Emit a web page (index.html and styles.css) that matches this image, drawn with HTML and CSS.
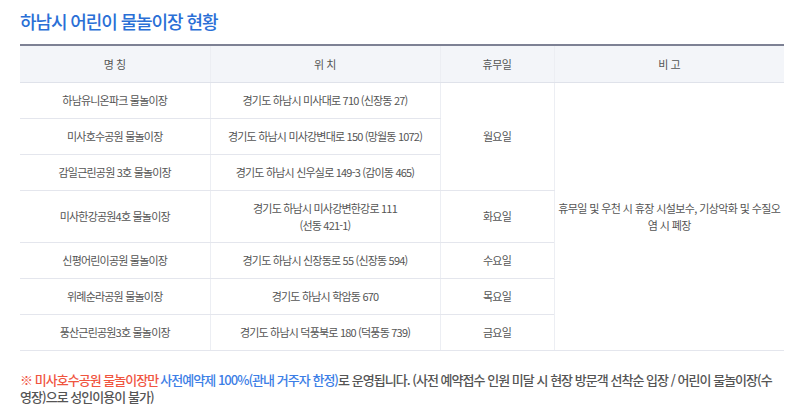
FILE: index.html
```html
<!DOCTYPE html>
<html lang="ko">
<head>
<meta charset="utf-8">
<link rel="stylesheet" href="styles.css">
</head>
<body>
<div class="wrap">
  <h2 class="title">하남시 어린이 물놀이장 현황</h2>
  <table class="tbl">
    <colgroup>
      <col class="c1"><col class="c2"><col class="c3"><col class="c4">
    </colgroup>
    <thead>
      <tr><th>명 칭</th><th>위 치</th><th>휴무일</th><th>비 고</th></tr>
    </thead>
    <tbody>
      <tr><td>하남유니온파크 물놀이장</td><td>경기도 하남시 미사대로 710 (신장동 27)</td><td rowspan="3">월요일</td><td rowspan="7" class="note-cell">휴무일 및 우천 시 휴장 시설보수, 기상악화 및 수질오염 시 폐장</td></tr>
      <tr><td>미사호수공원 물놀이장</td><td>경기도 하남시 미사강변대로 150 (망월동 1072)</td></tr>
      <tr><td>감일근린공원 3호 물놀이장</td><td>경기도 하남시 신우실로 149-3 (감이동 465)</td></tr>
      <tr class="tall"><td>미사한강공원4호 물놀이장</td><td>경기도 하남시 미사강변한강로 111<br>(선동 421-1)</td><td>화요일</td></tr>
      <tr><td>신평어린이공원 물놀이장</td><td>경기도 하남시 신장동로 55 (신장동 594)</td><td>수요일</td></tr>
      <tr><td>위례순라공원 물놀이장</td><td>경기도 하남시 학암동 670</td><td>목요일</td></tr>
      <tr><td>풍산근린공원3호 물놀이장</td><td>경기도 하남시 덕풍북로 180 (덕풍동 739)</td><td>금요일</td></tr>
    </tbody>
  </table>
  <p class="notice"><span class="red">※ 미사호수공원 물놀이장만</span><span class="blue">사전예약제 100%(관내 거주자 한정)</span>로 운영됩니다. (사전 예약접수 인원 미달 시 현장 방문객 선착순 입장 / 어린이 물놀이장(수영장)으로 성인이용이 불가)</p>
</div>
</body>
</html>
```

FILE: styles.css
```css
html, body {
  margin: 0;
  padding: 0;
  background: #ffffff;
}
body {
  font-family: "Noto Sans CJK KR", "Noto Sans", sans-serif;
  color: #555555;
}
.wrap {
  padding: 8px 16px 0 20px;
}
.title {
  margin: 0;
  font-size: 18px;
  line-height: 26px;
  font-weight: 500;
  color: #2a6fd6;
  letter-spacing: -1.1px;
}
.tbl {
  width: 764px;
  margin-top: 10px;
  border-collapse: collapse;
  table-layout: fixed;
  border-top: 2px solid #7d8194;
  border-bottom: 1px solid #c9cbd6;
}
.c1 { width: 190px; }
.c2 { width: 230px; }
.c3 { width: 114px; }
.c4 { width: 230px; }
.tbl th {
  background: #f3f5f9;
  height: 36px;
  padding: 0;
  font-size: 11px;
  font-weight: 400;
  color: #555555;
  letter-spacing: -0.5px;
  border-bottom: 1px solid #dfe2ea;
  border-left: 1px solid #eceef3;
}
.tbl td {
  height: 36px;
  padding: 0 4px;
  box-sizing: border-box;
  font-size: 11px;
  line-height: 17px;
  letter-spacing: -0.8px;
  text-align: center;
  color: #555555;
  border-bottom: 1px solid #e4e6ed;
  border-left: 1px solid #eceef3;
}
.tbl th:first-child,
.tbl tr td:first-child {
  border-left: none;
}
.tbl tr.tall td {
  height: 52px;
}
.tbl td.note-cell {
  padding: 0 3px;
  letter-spacing: -0.6px;
  border-left: 1px solid #eceef3;
}
.notice {
  margin: 20px 0 0 0;
  padding-right: 8px;
  font-size: 13px;
  line-height: 17px;
  font-weight: 500;
  letter-spacing: -0.97px;
  color: #555555;
}
.red { color: #f0553f; padding-right: 2px; }
.blue { color: #3c7ee6; }
```
